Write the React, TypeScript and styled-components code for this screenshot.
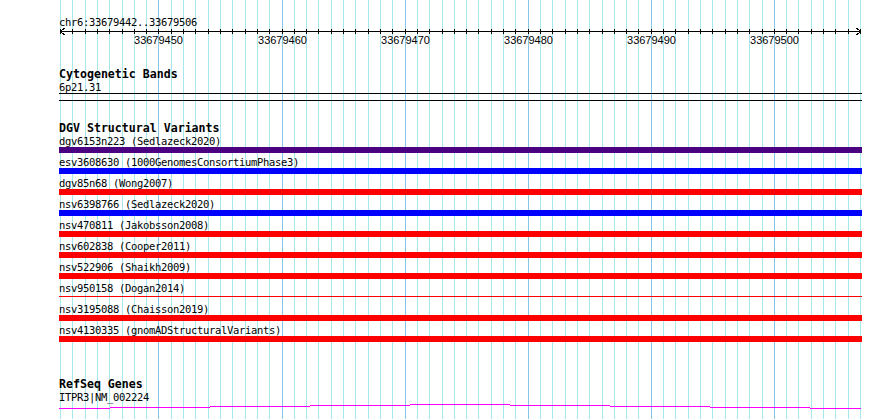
import styled, { createGlobalStyle } from "styled-components";

const GlobalStyle = createGlobalStyle`
    html, body {
        margin: 0;
        padding: 0;
        background: #ffffff;
    }
`;

const MONO = `"DejaVu Sans Mono", "Liberation Mono", monospace`;
const LEFT = 59;
const TRACK_WIDTH = 803;
const START = 33679442;
const BASES = 65;

// x position of base i on the page
const baseX = (i: number) => Math.round(60 + (i * 800) / BASES);

const Canvas = styled.div`
    position: relative;
    width: 890px;
    height: 419px;
    overflow: hidden;
    background: #ffffff;
`;

const GridLayer = styled.svg`
    position: absolute;
    left: 0;
    top: 0;
`;

const Tracks = styled.div`
    position: relative;
    display: flex;
    flex-direction: column;
    width: ${TRACK_WIDTH}px;
    padding-left: ${LEFT}px;
`;

const Label = styled.div<{ $top?: number }>`
    font-family: ${MONO};
    font-size: 10.5px;
    letter-spacing: -0.32px;
    line-height: 12px;
    height: 12px;
    color: #000;
    white-space: nowrap;
    margin-top: ${(p) => p.$top ?? 0}px;
`;

const Title = styled.div<{ $top: number }>`
    font-family: ${MONO};
    font-weight: bold;
    font-size: 11.6px;
    line-height: 14px;
    height: 14px;
    color: #000;
    white-space: nowrap;
    margin-top: ${(p) => p.$top}px;
`;

const Ruler = styled.svg`
    display: block;
    overflow: visible;
`;

const Band = styled.div`
    height: 6px;
    border-top: 1px solid #000;
    border-bottom: 1px solid #000;
`;

const VariantRow = styled.div`
    display: flex;
    flex-direction: column;
    margin-bottom: 3px;
`;

const BarSlot = styled.div`
    height: 6px;
`;

const Bar = styled.div<{ $color: string; $thin?: boolean }>`
    background: ${(p) => p.$color};
    height: ${(p) => (p.$thin ? 1 : 6)}px;
    margin-top: ${(p) => (p.$thin ? 2 : 0)}px;
`;

const GeneGlyph = styled.svg`
    display: block;
`;

const variants = [
    { id: "dgv6153n223", study: "Sedlazeck2020", color: "#4b0082" },
    { id: "esv3608630", study: "1000GenomesConsortiumPhase3", color: "#0000ff" },
    { id: "dgv85n68", study: "Wong2007", color: "#ff0000" },
    { id: "nsv6398766", study: "Sedlazeck2020", color: "#0000ff" },
    { id: "nsv470811", study: "Jakobsson2008", color: "#ff0000" },
    { id: "nsv602838", study: "Cooper2011", color: "#ff0000" },
    { id: "nsv522906", study: "Shaikh2009", color: "#ff0000" },
    { id: "nsv950158", study: "Dogan2014", color: "#ff0000", thin: true },
    { id: "nsv3195088", study: "Chaisson2019", color: "#ff0000" },
    { id: "nsv4130335", study: "gnomADStructuralVariants", color: "#ff0000" },
];

// gene backbone drawn as a shallow stepped arc
const geneSteps = [
    [59, 110, 408],
    [110, 210, 407],
    [210, 310, 406],
    [310, 410, 405],
    [410, 510, 404],
    [510, 610, 405],
    [610, 710, 406],
    [710, 810, 407],
    [810, 861, 408],
];

const baseIdx = Array.from({ length: BASES + 1 }, (_, i) => i);

function Grid() {
    return (
        <GridLayer width={890} height={419} shapeRendering="crispEdges">
            {baseIdx.map((i) => (
                <rect
                    key={i}
                    x={baseX(i)}
                    y={0}
                    width={1}
                    height={419}
                    fill={i % 10 === 8 ? "#86c6ea" : "#a6e8ee"}
                />
            ))}
        </GridLayer>
    );
}

function ScaleBar() {
    const end = 862 - LEFT;
    return (
        <Ruler width={TRACK_WIDTH} height={20} shapeRendering="crispEdges">
            <rect x={1} y={3} width={end - 2} height={1} fill="#000" />
            {baseIdx.map((i) => (
                <rect key={i} x={baseX(i) - LEFT} y={1} width={1} height={5} fill="#000" />
            ))}
            <path d="M1.5 3.5 L5.5 0 M1.5 3.5 L5.5 7" stroke="#000" strokeWidth={1} fill="none" />
            <path
                d={`M${end - 1.5} 3.5 L${end - 5.5} 0 M${end - 1.5} 3.5 L${end - 5.5} 7`}
                stroke="#000"
                strokeWidth={1}
                fill="none"
            />
            {baseIdx
                .filter((i) => i % 10 === 8)
                .map((i) => (
                    <text
                        key={i}
                        x={baseX(i) - LEFT + 0.5}
                        y={16}
                        textAnchor="middle"
                        fontFamily='"Liberation Sans", Arial, sans-serif'
                        fontSize={11}
                        fill="#000"
                    >
                        {START + i}
                    </text>
                ))}
        </Ruler>
    );
}

export default function App() {
    return (
        <>
            <GlobalStyle />
            <Canvas>
                <Grid />
                <Tracks>
                    <Label $top={16}>chr6:33679442..33679506</Label>
                    <ScaleBar />

                    <Title $top={19}>Cytogenetic Bands</Title>
                    <Label>6p21.31</Label>
                    <Band />

                    <Title $top={20}>DGV Structural Variants</Title>
                    {variants.map((v) => (
                        <VariantRow key={v.id}>
                            <Label>
                                {v.id} ({v.study})
                            </Label>
                            <BarSlot>
                                <Bar $color={v.color} $thin={v.thin} />
                            </BarSlot>
                        </VariantRow>
                    ))}

                    <Title $top={32}>RefSeq Genes</Title>
                    <Label>ITPR3|NM_002224</Label>
                    <GeneGlyph width={TRACK_WIDTH} height={7} shapeRendering="crispEdges">
                        {geneSteps.map(([x1, x2, y]) => (
                            <rect
                                key={x1}
                                x={x1 - LEFT}
                                y={y - 403}
                                width={x2 - x1}
                                height={1}
                                fill="#ff00ff"
                            />
                        ))}
                    </GeneGlyph>
                </Tracks>
            </Canvas>
        </>
    );
}
